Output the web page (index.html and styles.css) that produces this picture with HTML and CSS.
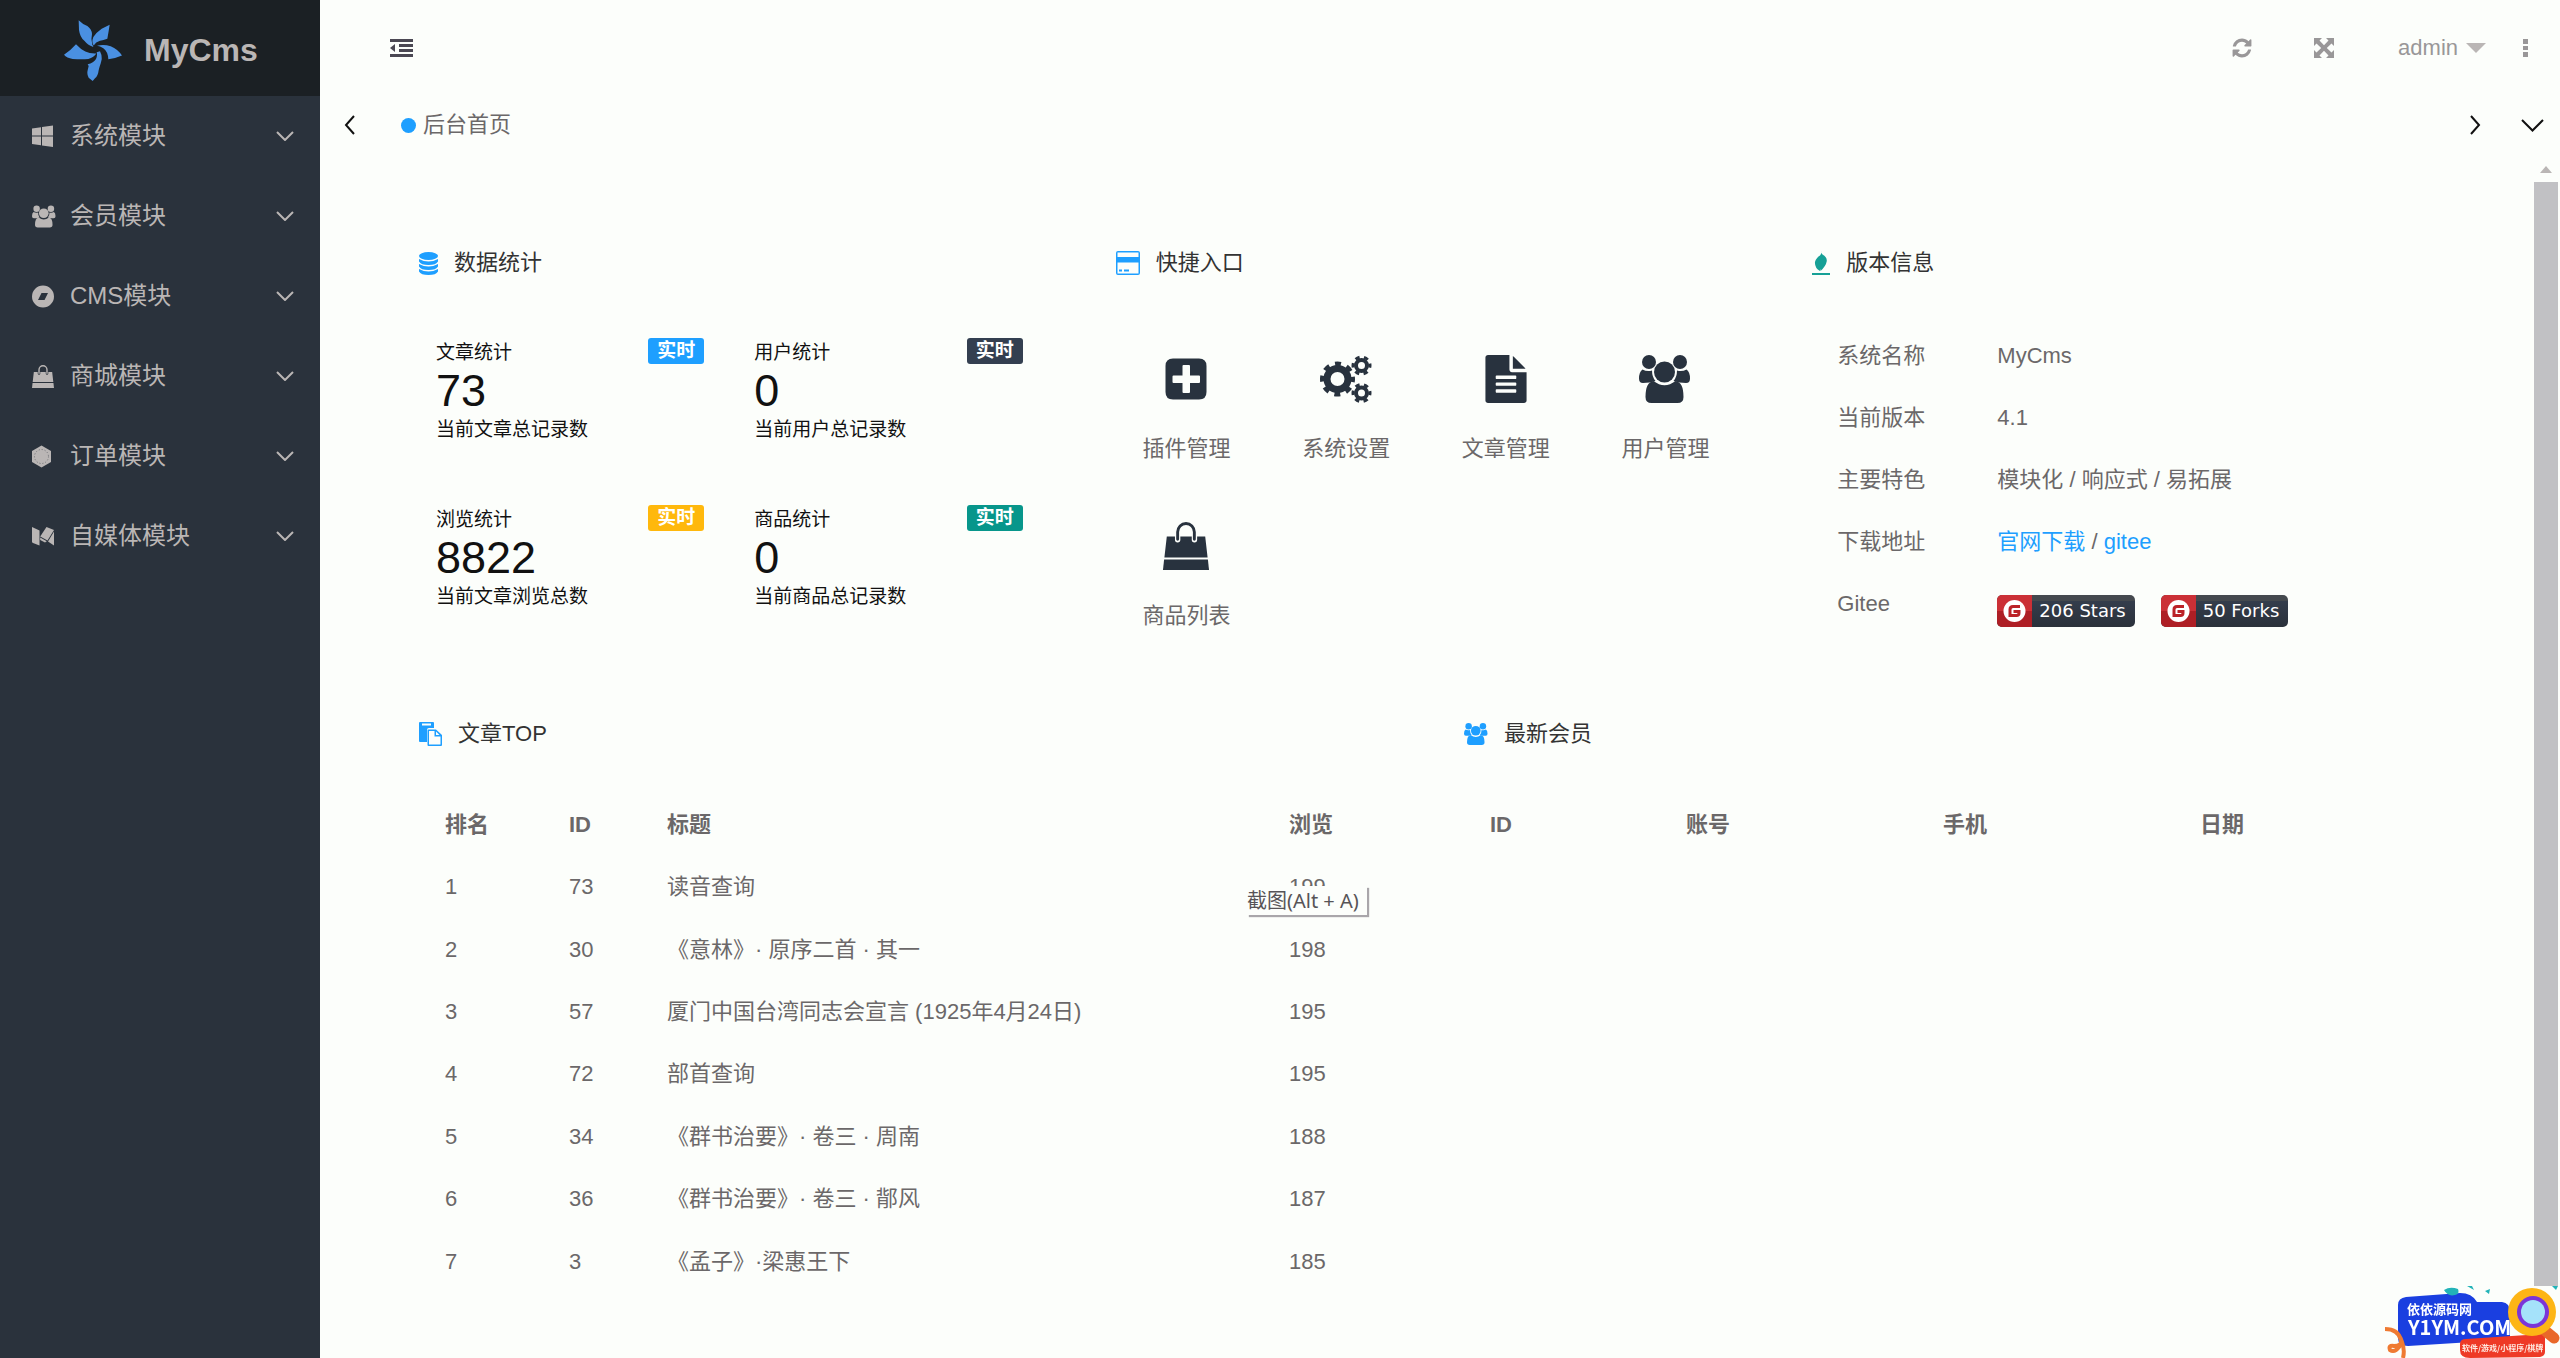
FILE: index.html
```html
<!DOCTYPE html>
<html lang="zh-CN">
<head>
<meta charset="utf-8">
<meta name="viewport" content="width=device-width, initial-scale=1">
<title>MyCms</title>
<link rel="stylesheet" href="styles.css">
</head>
<body>
<svg class="sprite" aria-hidden="true">
  <symbol id="i-chevron" viewBox="0 0 18 10"><path d="M1 1l8 8 8-8" fill="none" stroke="currentColor" stroke-width="2"/></symbol>
  <symbol id="i-users" viewBox="0 0 52 48">
    <ellipse cx="10" cy="7" rx="7" ry="7"/><ellipse cx="41" cy="7" rx="7" ry="7"/>
    <ellipse cx="25.500" cy="17" rx="10.500" ry="10.500"/>
    <path d="M3.500 14.500Q8 17 13 15.500Q13 22 16.500 26Q11 28 4 28Q0 28 0 23.500Q0 17 3.500 14.500z"/>
    <path d="M47.500 14.500Q43 17 38 15.500Q38 22 34.500 26Q40 28 47 28Q51 28 51 23.500Q51 17 47.500 14.500z"/>
    <path d="M14.500 26Q25.500 34.500 36.500 26Q44.500 27 44.500 42Q44.500 48 38.500 48H12.500Q6.500 48 6.500 42Q6.500 27 14.500 26z"/>
  </symbol>
  <symbol id="i-bag" viewBox="0 0 48 50">
    <path d="M4 15H12.500V18.500a2.800 2.800 0 0 0 5.600 0V15H30V18.500a2.800 2.800 0 0 0 5.600 0V15H44L46.500 37H1.500z"/>
    <path d="M1.200 39H46.800L48 50H0z"/>
    <path d="M15.300 18V10.500a8.700 9 0 0 1 17.400 0V18" fill="none" stroke="currentColor" stroke-width="3" stroke-linecap="round"/>
  </symbol>
</svg>

<div class="app">
  <aside class="sidebar">
    <div class="brand">
      <svg class="brand-mark" viewBox="132 28 174 182" preserveAspectRatio="none" aria-hidden="true">
        <path d="M176 29Q189 42 202 46Q215 55 216 70Q212 85 217 102Q224 111 215 106Q205 104 193 90Q180 80 177 58Z"/>
        <path d="M269 42Q266 62 262 84Q250 88 240 90Q227 94 221 104Q214 95 220 79Q230 64 245 54Z"/>
        <path d="M306 134Q286 143 265 145Q264 122 250 112Q240 106 231 105Q250 99 272 106Q294 115 306 134Z"/>
        <path d="M218 210L206 200Q200 190 203 178L206 165L203 160Q221 155 228 144Q233 133 230 124L240 121Q246 132 245 146L242 158Q239 166 236 178Q234 195 225 202Z"/>
        <path d="M132 132Q152 118 168 100Q182 115 196 122Q210 129 229 128Q222 140 205 144Q185 146 158 144Q140 142 132 132Z"/>
      </svg>
      <span>MyCms</span>
    </div>
    <nav class="menu">
      <a href="#"><svg class="mi" viewBox="0 0 22 22"><path d="M0 3L9 1.700V10H0zM10 1.500L21 0V10H10zM0 11H9V19.800L0 18.500zM10 11H21V21.500L10 20z"/></svg><span>系统模块</span><svg class="arrow"><use href="#i-chevron"/></svg></a>
      <a href="#"><svg class="mi wide"><use href="#i-users"/></svg><span>会员模块</span><svg class="arrow"><use href="#i-chevron"/></svg></a>
      <a href="#"><svg class="mi" viewBox="0 0 22 22"><path fill-rule="evenodd" d="M11 0a11 11 0 1 1 0 22a11 11 0 0 1 0-22zM9.500 7.500L6 14.500H12.500L16 7.500z"/></svg><span>CMS模块</span><svg class="arrow"><use href="#i-chevron"/></svg></a>
      <a href="#"><svg class="mi"><use href="#i-bag"/></svg><span>商城模块</span><svg class="arrow"><use href="#i-chevron"/></svg></a>
      <a href="#"><svg class="mi" viewBox="0 0 22 22"><path d="M9.500 0L19 5.500V16.500L9.500 22L0 16.500V5.500z"/><circle cx="9.500" cy="11" r="7" fill="none" stroke="#6d6f73" stroke-width="1" stroke-dasharray="1 2"/></svg><span>订单模块</span><svg class="arrow"><use href="#i-chevron"/></svg></a>
      <a href="#"><svg class="mi" viewBox="0 0 22 22"><path d="M0 1.500L7.500 5V20L1 17.500Q0 17 0 16z"/><path d="M14.500 1.500L22 4.500L15.500 15L8.200 11z"/><path d="M8.200 12L14.800 15.800L13 17L8.200 14.500zM22 6V20L16 16z"/></svg><span>自媒体模块</span><svg class="arrow"><use href="#i-chevron"/></svg></a>
    </nav>
  </aside>

  <div class="page">
    <header class="topbar">
      <button class="icon-btn fold" aria-label="折叠菜单"><svg width="23" height="18" viewBox="0 0 23 18"><path d="M0 0H23V3H0zM9 5H23V8H9zM9 10H23V13H9zM0 15H23V18H0zM5 5V13L0 9z"/></svg></button>
      <div class="tools">
        <button class="icon-btn" aria-label="刷新"><svg width="22" height="22" viewBox="0 0 1792 1792"><path d="M1639 1056q0 5-1 7-64 268-268 434.500t-478 166.500q-146 0-282.500-55t-243.500-157l-129 129q-19 19-45 19t-45-19-19-45v-448q0-26 19-45t45-19h448q26 0 45 19t19 45-19 45l-137 137q71 66 161 102t187 36q134 0 250-65t186-179q11-17 53-117 8-23 30-23h192q13 0 22.500 9.500t9.500 22.500zm25-800v448q0 26-19 45t-45 19h-448q-26 0-45-19t-19-45 19-45l138-138q-148-137-349-137-134 0-250 65t-186 179q-11 17-53 117-8 23-30 23h-199q-13 0-22.500-9.500t-9.500-22.500v-7q65-268 270-434.500t480-166.500q146 0 284 55.500t245 156.500l130-129q19-19 45-19t45 19 19 45z"/></svg></button>
        <button class="icon-btn full" aria-label="全屏"><svg width="20" height="20" viewBox="0 0 20 20"><path d="M0 0H8L5.500 2.500L10 7.200L14.500 2.500L12 0H20V8L17.500 5.500L12.800 10L17.500 14.500L20 12V20H12L14.500 17.500L10 12.800L5.500 17.500L8 20H0V12L2.500 14.500L7.200 10L2.500 5.500L0 8z"/></svg></button>
        <a class="user" href="#">admin<svg width="20" height="10" viewBox="0 0 20 10"><path d="M0 0H20L10 10z"/></svg></a>
        <button class="icon-btn" aria-label="更多"><svg width="6" height="18" viewBox="0 0 6 18"><path d="M1 0H6V5H1zM1 7H6V11H1zM1 13H6V18H1z"/></svg></button>
      </div>
    </header>

    <div class="tabs">
      <button class="icon-btn" aria-label="向左"><svg width="11" height="20" viewBox="0 0 11 20"><path class="line" d="M10 1L2 10L10 19"/></svg></button>
      <a class="tab" href="#"><i class="dot"></i>后台首页</a>
      <button class="icon-btn" aria-label="向右"><svg width="11" height="20" viewBox="0 0 11 20"><path class="line" d="M1 1L9 10L1 19"/></svg></button>
      <button class="icon-btn" aria-label="标签操作"><svg width="23" height="13" viewBox="0 0 23 13"><path class="line" d="M1 1L11.500 11.500L22 1"/></svg></button>
    </div>

    <div class="frame">
      <main class="content">
        <div class="grid three">
          <section class="card">
            <h2><svg class="blue" width="19" height="23" viewBox="0 0 19 23"><ellipse cx="9.500" cy="4" rx="9.500" ry="4"/><path d="M0 7Q9.500 12 19 7V9.500Q17 13 9.500 13T0 9.500zM0 12Q9.500 17 19 12V14.500Q17 18 9.500 18T0 14.500zM0 17Q9.500 22 19 17V19.500Q17 23 9.500 23T0 19.500z"/></svg>数据统计</h2>
            <div class="stats">
              <div class="stat"><h3>文章统计</h3><b class="badge b-blue">实时</b><strong>73</strong><p>当前文章总记录数</p></div>
              <div class="stat"><h3>用户统计</h3><b class="badge b-dark">实时</b><strong>0</strong><p>当前用户总记录数</p></div>
              <div class="stat"><h3>浏览统计</h3><b class="badge b-amber">实时</b><strong>8822</strong><p>当前文章浏览总数</p></div>
              <div class="stat"><h3>商品统计</h3><b class="badge b-teal">实时</b><strong>0</strong><p>当前商品总记录数</p></div>
            </div>
          </section>

          <section class="card">
            <h2><svg class="blue" width="24" height="24" viewBox="0 -2 24 24"><path fill-rule="evenodd" d="M2 -2H22Q24 -2 24 0V20Q24 22 22 22H2Q0 22 0 20V0Q0 -2 2 -2zM1.500 -.5V4H22.500V-.5zM1.500 9.500V20.500H22.500V9.500z"/><path d="M3 16.500H6V18.500H3zM8 16.500H13V18.500H8z"/></svg>快捷入口</h2>
            <div class="quick">
              <a href="#"><svg width="42" height="48" viewBox="0 0 42 48"><path fill-rule="evenodd" d="M8 3.500H34Q41.500 3.500 41.500 11V37Q41.500 44.500 34 44.500H8Q.5 44.500 .5 37V11Q.5 3.500 8 3.500zM18.500 10Q17.500 10 17.500 11V20.500H8.500Q7.500 20.500 7.500 21.500V27Q7.500 28 8.500 28H17.500V37Q17.500 38 18.500 38H24Q25 38 25 37V28H34Q35 28 35 27V21.500Q35 20.500 34 20.500H25V11Q25 10 24 10z"/></svg>插件管理</a>
              <a href="#"><svg class="gears" width="52" height="48" viewBox="0 0 52 48"><circle cx="17.500" cy="24" r="10.500" stroke-width="7"/><circle cx="17.500" cy="24" r="15" stroke-width="5" stroke-dasharray="5.890 5.890" stroke-dashoffset="2.900"/><circle cx="41.500" cy="10.500" r="5.500" stroke-width="4"/><circle cx="41.500" cy="10.500" r="8.500" stroke-width="3" stroke-dasharray="4.450 4.450" stroke-dashoffset="2.200"/><circle cx="41.500" cy="38" r="5.500" stroke-width="4"/><circle cx="41.500" cy="38" r="8.500" stroke-width="3" stroke-dasharray="4.450 4.450" stroke-dashoffset="2.200"/></svg>系统设置</a>
              <a href="#"><svg width="42" height="48" viewBox="128 0 1536 1792"><path d="M1596 476q14 14 28 36h-472v-472q22 14 36 28zm-476 164h544v1056q0 40-28 68t-68 28h-1344q-40 0-68-28t-28-68v-1600q0-40 28-68t68-28h800v544q0 40 28 68t68 28zm160 736v-64q0-14-9-23t-23-9h-704q-14 0-23 9t-9 23v64q0 14 9 23t23 9h704q14 0 23-9t9-23zm0-256v-64q0-14-9-23t-23-9h-704q-14 0-23 9t-9 23v64q0 14 9 23t23 9h704q14 0 23-9t9-23zm0-256v-64q0-14-9-23t-23-9h-704q-14 0-23 9t-9 23v64q0 14 9 23t23 9h704q14 0 23-9t9-23z"/></svg>文章管理</a>
              <a href="#"><svg width="52" height="48"><use href="#i-users"/></svg>用户管理</a>
              <a href="#"><svg width="48" height="48"><use href="#i-bag"/></svg>商品列表</a>
            </div>
          </section>

          <section class="card">
            <h2><svg class="teal" width="18" height="24" viewBox="0 0 18 24"><path d="M9 0Q9 2 10.500 3.500Q15 6 14.800 10Q14 15 8.500 20Q9.500 16 8 20Q2.500 17 3 11Q4 7 8 4.500Q10 2.500 9 0zM0 22H18V24H0z"/></svg>版本信息</h2>
            <table class="info">
              <tr><th scope="row">系统名称</th><td>MyCms</td></tr>
              <tr><th scope="row">当前版本</th><td>4.1</td></tr>
              <tr><th scope="row">主要特色</th><td>模块化 / 响应式 / 易拓展</td></tr>
              <tr><th scope="row">下载地址</th><td><a href="#">官网下载</a> / <a href="#">gitee</a></td></tr>
              <tr><th scope="row">Gitee</th><td>
                <div class="repo">
                  <a href="#"><svg viewBox="0 0 35 32"><circle cx="17.500" cy="16" r="11"/><path d="M23 11.500H16Q13 11.500 13 14.500V20.500H19.500Q22 20.500 22 18V16.500H16.500"/></svg><span>206 Stars</span></a>
                  <a href="#"><svg viewBox="0 0 35 32"><circle cx="17.500" cy="16" r="11"/><path d="M23 11.500H16Q13 11.500 13 14.500V20.500H19.500Q22 20.500 22 18V16.500H16.500"/></svg><span>50 Forks</span></a>
                </div></td></tr>
            </table>
          </section>
        </div>

        <div class="grid two">
          <section class="card">
            <h2><svg class="blue" width="23" height="24" viewBox="0 0 23 24"><path fill-rule="evenodd" d="M1 0H14Q15 0 15 1V6H10Q8 6 8 8V20H1Q0 20 0 19V1Q0 0 1 0zM3 1.500V3.500H12V1.500z"/><path fill-rule="evenodd" d="M9.500 7.500H17L23 13V23Q23 24 22 24H9.500Q8.500 24 8.500 23V8.500Q8.500 7.500 9.500 7.500zM10 9V22.500H21.500V14.500H15.500V9zM17 9.500V13H20.500z"/></svg>文章TOP</h2>
            <table class="list rank">
              <thead><tr><th class="c-rank">排名</th><th class="c-id">ID</th><th>标题</th><th class="c-views">浏览</th></tr></thead>
              <tbody>
                <tr><td>1</td><td>73</td><td>读音查询</td><td class="hinted">199<span class="hint" role="tooltip">截图(Alt + A)</span></td></tr>
                <tr><td>2</td><td>30</td><td>《意林》· 原序二首 · 其一</td><td>198</td></tr>
                <tr><td>3</td><td>57</td><td>厦门中国台湾同志会宣言 (1925年4月24日)</td><td>195</td></tr>
                <tr><td>4</td><td>72</td><td>部首查询</td><td>195</td></tr>
                <tr><td>5</td><td>34</td><td>《群书治要》· 卷三 · 周南</td><td>188</td></tr>
                <tr><td>6</td><td>36</td><td>《群书治要》· 卷三 · 鄁风</td><td>187</td></tr>
                <tr><td>7</td><td>3</td><td>《孟子》·梁惠王下</td><td>185</td></tr>
              </tbody>
            </table>
          </section>
          <section class="card">
            <h2><svg class="blue" width="24" height="24"><use href="#i-users"/></svg>最新会员</h2>
            <table class="list">
              <thead><tr><th class="c-uid">ID</th><th>账号</th><th>手机</th><th>日期</th></tr></thead>
            </table>
          </section>
        </div>
      </main>
      <div class="scrollbar" aria-hidden="true"><i class="up"></i><i class="thumb"></i></div>
    </div>
  </div>
</div>

<svg class="watermark" viewBox="0 0 176 72" role="img" aria-label="依依源码网 Y1YM.COM">
  <path d="M14 19Q14 12 22 11L76 7Q88 7 93 16L118 16Q126 17 126 26V50Q126 54 120 54L24 60Q14 60 14 52z" fill="#1a3fe0"/>
  <path d="M60 4Q66 0 74 3Q76 8 71 9Q64 11 60 4zM83 0H88L90 4zM101 5L106 3L105 8zM168 0H174L172 4z" fill="#22b3b8"/>
  <path d="M1 43Q14 43 17 54Q18 60 10 60Q4 59 6 64Q12 68 18 56Q21 64 19 72" fill="none" stroke="#ef7a32" stroke-width="4"/>
  <text x="23" y="28" class="wm-name">依依源码网</text>
  <text x="24" y="49" class="wm-host">Y1YM.COM</text>
  <path d="M82 53L158 48Q161 48 161 52V66Q161 70 156 71L86 72Q76 72 76 64V58Q76 53 82 53z" fill="#ee3a26"/>
  <text x="78" y="65" class="wm-tag">软件/游戏/小程序/棋牌</text>
  <path d="M159 43L170 52" stroke="#e9682a" stroke-width="11" stroke-linecap="round"/>
  <circle cx="148" cy="26" r="24" fill="#fdb515"/>
  <circle cx="149" cy="26" r="16" fill="#7b35d8"/>
  <circle cx="149" cy="26" r="12" fill="#a5e2fa"/>
</svg>
</body>
</html>
```
FILE: styles.css
```css
* { box-sizing: border-box; margin: 0; padding: 0; }
body {
  min-height: 100vh;
  background: #fcfefb;
  color: #6b6869;
  font: 22px/30px "Liberation Sans", "Noto Sans CJK SC", sans-serif;
  text-spacing-trim: space-all;
}
a { color: inherit; text-decoration: none; }
svg { display: block; flex: none; fill: currentColor; }
.sprite { position: absolute; width: 0; height: 0; }
.icon-btn { border: 0; background: none; color: inherit; cursor: pointer; }
.blue { color: #1e9fff; }
.teal { color: #16a096; }

.app { display: flex; min-height: 100vh; }

/* Sidebar */
.sidebar { width: 320px; flex: none; background: #2a323c; color: #bab6b5; }
.brand {
  display: flex; align-items: center; gap: 22px;
  height: 96px; padding: 4px 0 0 64px;
  background: #1b2024;
  font-size: 32px; font-weight: bold;
}
.brand-mark { width: 58px; height: 61px; color: #4a90e2; }
.menu a {
  display: flex; align-items: center; gap: 16px;
  height: 80px; padding: 0 26px 0 32px;
  font-size: 24px;
}
.menu span { flex: 1; }
.mi { width: 22px; height: 23px; }
.mi.wide { width: 24px; margin-right: -2px; }
.arrow { width: 18px; height: 10px; }

/* Header and tab bar */
.page { flex: 1; min-width: 0; display: flex; flex-direction: column; }
.topbar { display: flex; justify-content: space-between; align-items: center; height: 96px; padding: 0 32px 0 70px; }
.fold { color: #4b4853; }
.tools { display: flex; align-items: center; color: #999798; }
.full { margin: 0 64px 0 61px; }
.user { display: flex; align-items: center; gap: 8px; margin-right: 36px; }
.user svg { color: #bab6b5; }
.tabs { display: flex; align-items: center; gap: 40px; height: 58px; padding: 0 16px 0 24px; color: #111; }
.tabs .line { fill: none; stroke: currentColor; stroke-width: 2; }
.tab { flex: 1; display: flex; align-items: center; gap: 7px; padding-left: 6px; color: #6b6869; }
.dot { width: 15px; height: 15px; border-radius: 50%; background: #1e9fff; }

/* Content */
.frame { flex: 1; display: flex; }
.content { flex: 1; min-width: 0; padding: 75px 70px 16px; }
.grid { display: grid; gap: 16px; }
.three { grid-template-columns: repeat(3, 1fr); min-height: 471px; }
.two { grid-template-columns: repeat(2, 1fr); }
.card h2 {
  display: flex; align-items: center; gap: 16px;
  height: 68px; padding-left: 29px;
  color: #333; font-size: 22px; font-weight: normal;
}

.stats { display: grid; grid-template-columns: 1fr 1fr; gap: 59px 50px; padding: 41px 48px 0 46px; }
.stat { display: grid; grid-template-columns: 1fr auto; align-items: start; color: #111; font-size: 19px; }
.stat h3 { font-size: 19px; font-weight: normal; }
.stat strong { grid-column: 1 / -1; font-size: 45px; line-height: 46px; font-weight: normal; }
.stat p { grid-column: 1 / -1; line-height: 32px; }
.badge { padding: 0 9px; border-radius: 3px; color: #fff; line-height: 26px; }
.b-blue { background: #1e9fff; }
.b-dark { background: #343f50; }
.b-amber { background: #ffb80c; }
.b-teal { background: #07968b; }

.quick { display: grid; grid-template-columns: repeat(4, 1fr); gap: 58px 0; padding: 58px 22px 0 20px; }
.quick a { display: flex; flex-direction: column; align-items: center; gap: 31px; }
.quick svg { color: #28323e; }
.quick .gears { fill: none; stroke: currentColor; }

table { border-collapse: collapse; text-align: left; }
.info { margin: 28px 0 0 30px; }
.info tr { height: 62px; }
.info th { width: 160px; padding-left: 24px; font-weight: normal; }
.info td { padding-left: 24px; }
.info td a { color: #1e9fff; }
.repo { display: flex; gap: 26px; padding-top: 14px; }
.repo a {
  display: flex; align-items: center; overflow: hidden;
  height: 32px; border-radius: 5px;
  background: linear-gradient(#44494e 0 18%, #343d4c 18%, #2a313a);
  font: 18px/32px "DejaVu Sans", sans-serif;
}
.repo svg { width: 35px; height: 32px; background: linear-gradient(#cb3036 50%, #ae1f25 50%); }
.repo circle { fill: #fff; }
.repo path { fill: none; stroke: #bb2228; stroke-width: 3; }
.repo span { padding: 0 9px 0 7px; color: #fff; }

.list { table-layout: fixed; width: calc(100% - 62px); margin: 26px 31px 0; }
.list th, .list td { height: 62px; padding: 0 24px; white-space: nowrap; }
.rank { height: 499px; }
.c-rank { width: 124px; }
.c-id { width: 98px; }
.c-views { width: 123px; }
.c-uid { width: 196px; }

.hinted { position: relative; }
.hint {
  position: absolute; left: -18px; top: 30px;
  padding: 0 8px 0 0;
  background: #fcfefb;
  box-shadow: 2px 2px 1px #a9a6aa;
  color: #575457;
  font: 20px/29px "Noto Sans", "Noto Sans CJK SC", sans-serif;
}

/* Scroll bar */
.scrollbar { width: 26px; display: flex; flex-direction: column; padding-bottom: 72px; }
.up { width: 0; margin: 12px 7px 9px 6px; border: solid transparent; border-width: 0 6px 7px; border-bottom-color: #bab6b5; }
.thumb { flex: 1; margin-right: 2px; background: #c1c1c4; }

.watermark { position: fixed; right: 0; bottom: 0; width: 176px; height: 72px; }
.watermark text { fill: #fff; font-family: "Noto Sans CJK SC", sans-serif; font-weight: bold; }
.wm-name { font-size: 13px; }
.wm-host { font-size: 20px; }
.watermark .wm-tag { font-size: 8px; fill: #ffe9e0; }
```
